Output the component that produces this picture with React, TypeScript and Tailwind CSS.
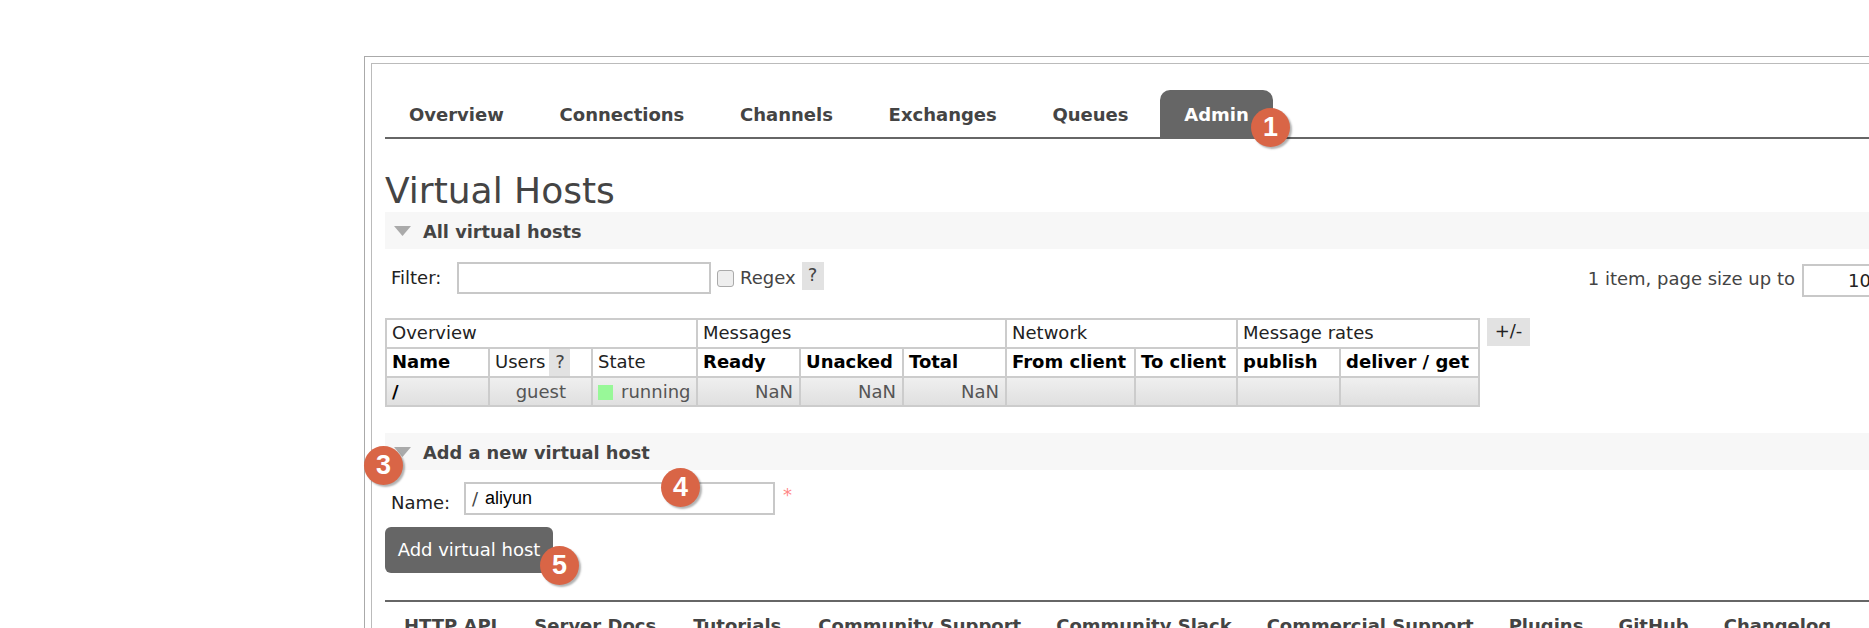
const font = "font-['DejaVu_Sans',Verdana,sans-serif]";

function Badge({ n, className }: { n: number; className: string }) {
  return (
    <div
      className={`absolute flex h-[39px] w-[39px] items-center justify-center rounded-full bg-[#d96546] text-[27px] font-bold text-white shadow-[2px_2px_2px_rgba(0,0,0,0.3)] font-['Liberation_Sans',Arial,sans-serif] ${className}`}
    >
      {n}
    </div>
  );
}

function Help({ className = "" }: { className?: string }) {
  return <span className={`inline-block bg-[#e2e2e2] text-center text-[#444] ${className}`}>?</span>;
}

const tabs = ["Overview", "Connections", "Channels", "Exchanges", "Queues"];
const foot = ["HTTP API", "Server Docs", "Tutorials", "Community Support", "Community Slack", "Commercial Support", "Plugins", "GitHub", "Changelog"];

function Section({ title }: { title: string }) {
  return (
    <div className="flex h-[37px] items-center bg-[#f7f7f7] pl-[9px]">
      <svg width="17" height="10" viewBox="0 0 17 10" className="mr-[12px]">
        <path d="M0 0H17L8.5 10Z" fill="#aaaaaa" />
      </svg>
      <span className="pt-[4px] text-[17.8px] font-bold text-[#444]">{title}</span>
    </div>
  );
}

const cols = [103, 103, 105, 103, 103, 103, 129, 102, 103, 139];
const head = ["Ready", "Unacked", "Total", "From client", "To client", "publish", "deliver / get"];
const cell = "border-2 border-[#cccccc] pl-[5px] pr-[6px] pt-0 pb-0";
const cellUp = "border-2 border-[#cccccc] pl-[5px] pr-[6px] pt-0 pb-[2px] leading-[25px]";

export default function App() {
  return (
    <div className={`relative h-[628px] w-[1869px] overflow-hidden bg-white ${font}`}>
      <div className="ml-[364px] mt-[56px] h-[700px] border border-r-0 border-[#aaaaaa] pl-[6px] pt-[6px]">
        <div className="h-[700px] border border-r-0 border-[#bbbbbb] pl-[13px] pt-[26px]">
          <div className="relative">
            <div className="flex h-[49px] items-end border-b-2 border-[#666]">
              {tabs.map((t) => (
                <span key={t} className="mr-[7.7px] flex h-[47px] items-center px-[24px] pt-[2px] text-[18px] font-bold text-[#444]">{t}</span>
              ))}
              <span className="flex h-[47px] items-center rounded-t-[10px] bg-[#666] px-[24px] pt-[2px] text-[18px] font-bold text-white">Admin</span>
            </div>
            <Badge n={1} className="left-[866px] top-[18px]" />
          </div>
          <h1 className="mt-[34px] h-[39px] text-[36px] leading-[36px] text-[#444]">Virtual Hosts</h1>
          <Section title="All virtual hosts" />
          <div className="mt-[13px] flex h-[32px] items-center pl-[6px] text-[18px] text-[#444]">
            <span className="w-[66px] shrink-0 pb-[2px] text-[#222]">Filter:</span>
            <div className="h-[32px] w-[254px] shrink-0 border-2 border-[#c8c8c8]" />
            <span className="ml-[6px] h-[17px] w-[17px] shrink-0 rounded-[3px] border border-[#aaa] bg-[#eeeeee]" />
            <span className="ml-[6px] pb-[2px]">Regex</span>
            <Help className="ml-[6px] h-[28px] w-[22px] self-start leading-[26px]" />
            <span className="ml-auto whitespace-nowrap">1 item, page size up to</span>
            <div className="-mr-[100px] ml-[7px] mt-[4px] flex h-[33px] w-[167px] shrink-0 items-center border-2 border-[#c8c8c8] pl-[44px] text-[#222]">100</div>
          </div>
          <div className="mt-[24px] flex items-start">
            <table className="w-[1093px] table-fixed border-collapse text-[18px] leading-[27px]">
              <colgroup>
                {cols.map((c, i) => <col key={i} style={{ width: c }} />)}
              </colgroup>
              <tbody>
                <tr className="h-[29px] text-[#222]">
                  <td colSpan={3} className={cellUp}>Overview</td>
                  <td colSpan={3} className={cellUp}>Messages</td>
                  <td colSpan={2} className={cellUp}>Network</td>
                  <td colSpan={2} className={cellUp}>Message rates</td>
                </tr>
                <tr className="h-[29px] text-black">
                  <td className={`${cellUp} font-bold`}>Name</td>
                  <td className={`${cell} text-[#222]`}>
                    <div className="flex items-start gap-[4px]"><span className="leading-[25px]">Users</span><Help className="h-[27px] w-[21px] leading-[25px]" /></div>
                  </td>
                  <td className={`${cellUp} text-[#222]`}>State</td>
                  {head.map((h) => (
                    <td key={h} className={`${cellUp} whitespace-nowrap font-bold`}>{h}</td>
                  ))}
                </tr>
                <tr className="h-[29px] bg-gradient-to-b from-[#f0f0f0] to-[#dfdfdf] text-[#555]">
                  <td className={`${cell} font-bold text-black`}>/</td>
                  <td className={`${cell} text-right`}><span className="mr-[19px]">guest</span></td>
                  <td className={`${cell} whitespace-nowrap`}>
                    <span className="mr-[8px] inline-block h-[15px] w-[15px] bg-[#98f898] align-[-2px]" />running
                  </td>
                  <td className={`${cell} text-right`}>NaN</td>
                  <td className={`${cell} text-right`}>NaN</td>
                  <td className={`${cell} text-right`}>NaN</td>
                  <td className={cell} />
                  <td className={cell} />
                  <td className={cell} />
                  <td className={cell} />
                </tr>
              </tbody>
            </table>
            <span className="ml-[7px] h-[28px] w-[43px] bg-[#e2e2e2] text-center text-[18px] leading-[26px] text-[#222]">+/-</span>
          </div>
          <div className="relative mt-[26px]">
            <Section title="Add a new virtual host" />
            <Badge n={3} className="left-[-21px] top-[13px]" />
            <div className="relative mt-[12px] flex h-[33px] items-center pl-[6px] text-[18px] text-[#222]">
              <span className="w-[73px] pt-[7px]">Name:</span>
              <div className="flex h-[33px] w-[311px] items-center border-2 border-[#c8c8c8] pl-[6px]">
                <span className="mr-[7px] text-[#444]">/</span>
                <span className="font-['Liberation_Sans',Arial,sans-serif] text-black">aliyun</span>
              </div>
              <span className="mb-[8px] ml-[8px] text-[#f88]">*</span>
              <Badge n={4} className="left-[276px] top-[-14px]" />
            </div>
            <div className="relative mt-[12px] w-fit">
              <div className="flex h-[46px] w-[168px] items-center justify-center rounded-[6px] bg-[#666] pb-[2px] text-[18px] text-white">Add virtual host</div>
              <Badge n={5} className="left-[155px] top-[19px]" />
            </div>
          </div>
          <div className="mt-[27px] flex border-t-2 border-[#666] pl-[19px] pt-[10px] text-[18px] font-bold text-[#444]">
            {foot.map((f, i) => (
              <span key={f} className={`whitespace-nowrap ${i < 3 ? "mr-[37px]" : "mr-[35px]"}`}>{f}</span>
            ))}
          </div>
        </div>
      </div>
    </div>
  );
}
